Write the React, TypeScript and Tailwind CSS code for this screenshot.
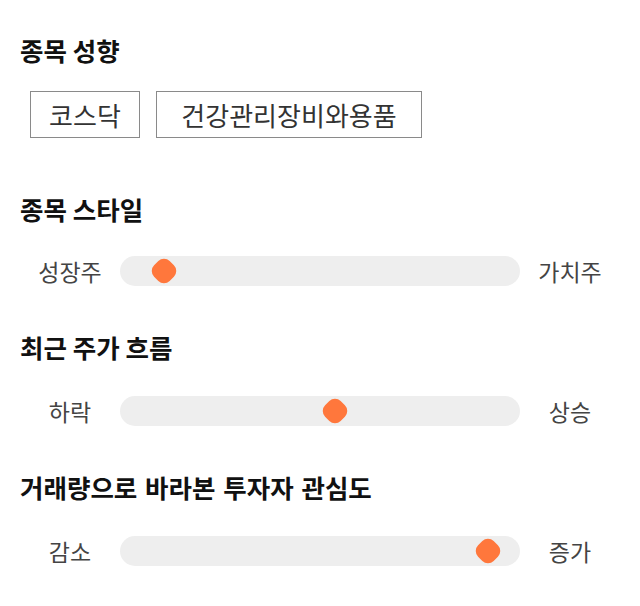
const FONT = "font-['Noto_Sans_CJK_KR','Noto_Sans',sans-serif]";

function Slider({ left, right, value }: { left: string; right: string; value: number }) {
  return (
    <div className="flex items-center h-[30px]">
      <span className="w-[100px] text-center text-[23px] text-[#444]">{left}</span>
      <div className="relative w-[400px] h-[30px] bg-[#eeeeee] rounded-[15px]">
        <div
          className="absolute top-[4px] w-[22px] h-[22px] -ml-[11px] rotate-45 rounded-[8px] bg-[#ff773c]"
          style={{ left: `${value}%` }}
        />
      </div>
      <span className="w-[100px] text-center text-[23px] text-[#444]">{right}</span>
    </div>
  );
}

export default function App() {
  return (
    <div className={`${FONT} bg-white w-[640px] h-[606px] px-5 pt-[34px]`}>
      <h2 className="text-[25.5px] font-bold text-[#111] leading-[32px]">종목 성향</h2>
      <div className="flex gap-4 ml-[10px] mt-[25px]">
        <span className="border border-[#8a8a8a] h-[47px] w-[110px] flex items-center justify-center text-[26px] text-[#333]">
          코스닥
        </span>
        <span className="border border-[#8a8a8a] h-[47px] w-[266px] flex items-center justify-center text-[26px] text-[#333]">
          건강관리장비와용품
        </span>
      </div>

      <h2 className="text-[25.5px] font-bold text-[#111] leading-[32px] mt-[55px]">종목 스타일</h2>
      <div className="mt-[31px]">
        <Slider left="성장주" right="가치주" value={11} />
      </div>

      <h2 className="text-[25.5px] font-bold text-[#111] leading-[32px] mt-[45px]">최근 주가 흐름</h2>
      <div className="mt-[33px]">
        <Slider left="하락" right="상승" value={53.75} />
      </div>

      <h2 className="text-[25.5px] font-bold text-[#111] leading-[32px] mt-[45px] [word-spacing:2px]">거래량으로 바라본 투자자 관심도</h2>
      <div className="mt-[33px]">
        <Slider left="감소" right="증가" value={92} />
      </div>
    </div>
  );
}
